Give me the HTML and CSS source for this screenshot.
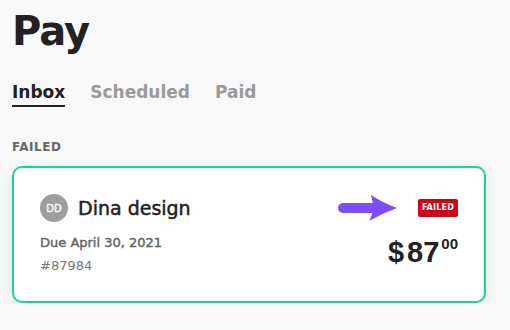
FILE: index.html
```html
<!DOCTYPE html>
<html>
<head>
<meta charset="utf-8">
<link rel="stylesheet" href="styles.css">
</head>
<body>
<div class="page">
  <h1 class="title">Pay</h1>
  <nav class="tabs">
    <span class="tab active">Inbox</span>
    <span class="tab">Scheduled</span>
    <span class="tab">Paid</span>
  </nav>
  <div class="section-label">FAILED</div>
  <div class="card">
    <div class="card-left">
      <div class="payee">
        <div class="avatar">DD</div>
        <div class="name">Dina design</div>
      </div>
      <div class="due">Due April 30, 2021</div>
      <div class="ref">#87984</div>
    </div>
    <div class="card-right">
      <div class="status-row">
        <svg class="arrow" width="60" height="28" viewBox="0 0 60 28">
          <rect x="0" y="9" width="38" height="10" rx="5" fill="#7b4dff"/>
          <path d="M33 1 Q45 9 59 14 Q45 19 31 27 Q35 20 35 14 Q35 8 33 1 Z" fill="#7b4dff"/>
        </svg>
        <span class="badge">FAILED</span>
      </div>
      <div class="amount"><span class="currency">$</span><span class="dollars">87</span><span class="cents">00</span></div>
    </div>
  </div>
</div>
</body>
</html>
```

FILE: styles.css
```css
html, body {
  margin: 0;
  padding: 0;
  background: #f8f8f8;
}
body {
  font-family: "DejaVu Sans", sans-serif;
  color: #222;
}
.page {
  padding: 5px 24px 0 12px;
}
.title {
  margin: 0;
  font-size: 40px;
  line-height: 52px;
  font-weight: 700;
  letter-spacing: -1px;
  color: #222;
}
.tabs {
  display: flex;
  gap: 25px;
  margin-top: 24px;
}
.tab {
  font-size: 17px;
  font-weight: 700;
  color: #9a9a9a;
  line-height: 22px;
  padding-bottom: 2px;
}
.tab.active {
  color: #222;
  border-bottom: 2px solid #222;
}
.section-label {
  margin-top: 33px;
  font-size: 12px;
  font-weight: 700;
  letter-spacing: 0.5px;
  color: #666;
  line-height: 14px;
}
.card {
  margin-top: 12px;
  height: 137px;
  box-sizing: border-box;
  width: 474px;
  border: 2px solid #1fd390;
  border-radius: 10px;
  background: #fff;
  box-shadow: 0 6px 16px rgba(0,0,0,0.07);
  display: flex;
  justify-content: space-between;
  padding: 26px 26px 0 26px;
}
.payee {
  display: flex;
  align-items: center;
  gap: 10px;
}
.avatar {
  width: 28px;
  height: 28px;
  border-radius: 50%;
  background: #9e9e9e;
  color: #fff;
  font-size: 10px;
  font-weight: 400;
  -webkit-text-stroke: 0.3px #fff;
  display: flex;
  align-items: center;
  justify-content: center;
}
.name {
  font-size: 19px;
  font-weight: 400;
  -webkit-text-stroke: 0.5px #222;
  color: #222;
}
.due {
  margin-top: 12px;
  font-size: 13px;
  font-weight: 400;
  -webkit-text-stroke: 0.45px #666;
  color: #666;
  line-height: 18px;
}
.ref {
  margin-top: 5px;
  font-size: 13px;
  color: #777;
  line-height: 18px;
}
.card-right {
  display: flex;
  flex-direction: column;
  align-items: flex-end;
}
.status-row {
  display: flex;
  align-items: center;
  gap: 20px;
  height: 28px;
}
.badge {
  background: #d0021b;
  color: #fff;
  font-size: 8px;
  font-weight: 700;
  letter-spacing: 0.2px;
  padding: 0 4px;
  height: 18px;
  line-height: 18px;
  border-radius: 2px;
}
.amount {
  margin-top: 14px;
  font-family: "Liberation Sans", "DejaVu Sans", sans-serif;
  font-size: 29px;
  font-weight: 700;
  color: #222;
  line-height: 32px;
  display: flex;
  align-items: flex-start;
}
.currency {
  margin-right: 3px;
}
.cents {
  font-size: 15px;
  font-weight: 700;
  line-height: 16px;
  margin-left: 2px;
}
```
